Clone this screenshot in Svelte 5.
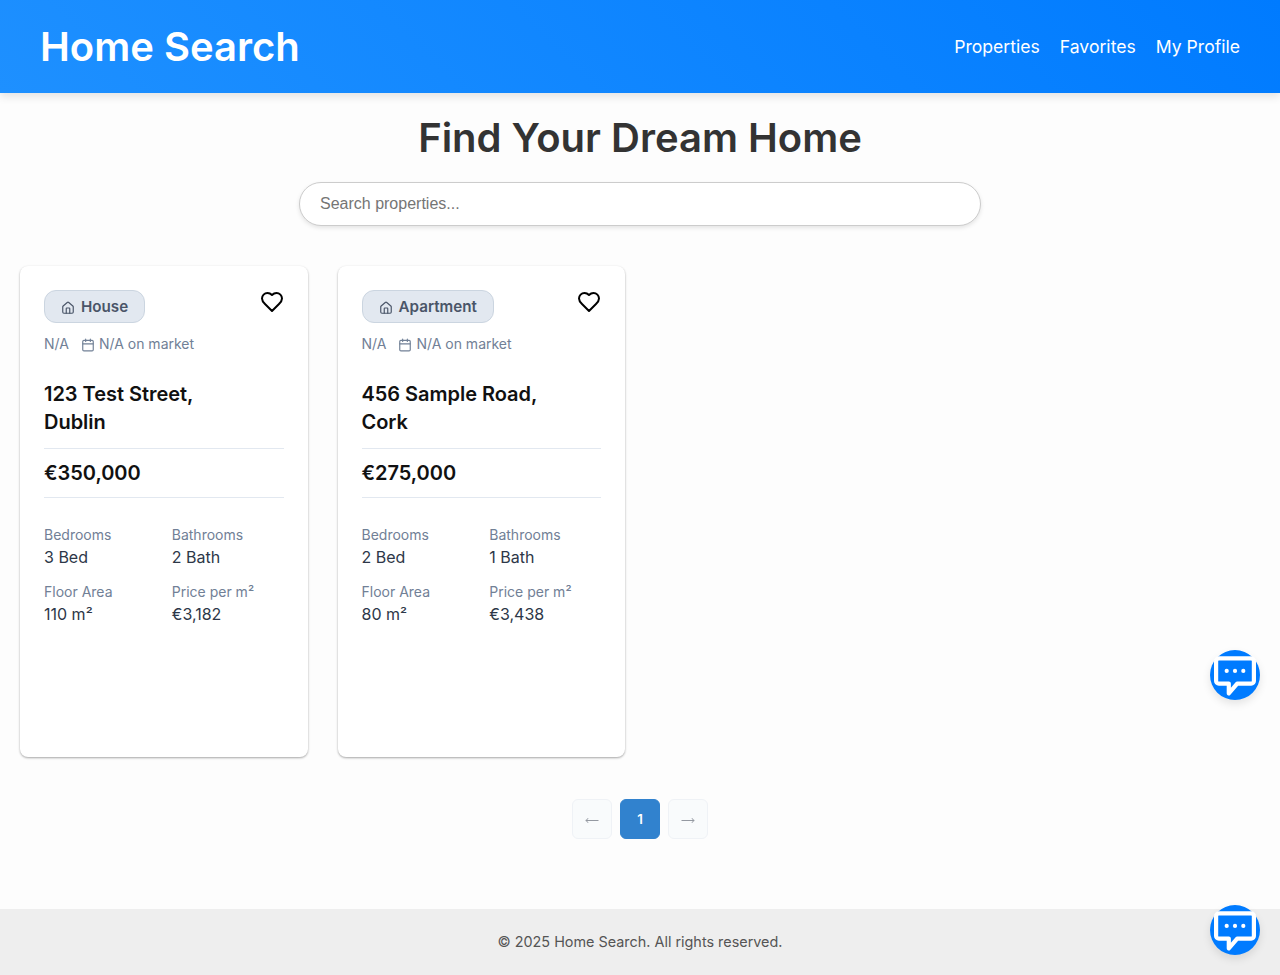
<script>
  const links = ['Properties', 'Favorites', 'My Profile'];
  const properties = [
    { type: 'House', address: '123 Test Street, Dublin', price: '€350,000', facts: [['Bedrooms', '3 Bed'], ['Bathrooms', '2 Bath'], ['Floor Area', '110 m²'], ['Price per m²', '€3,182']] },
    { type: 'Apartment', address: '456 Sample Road, Cork', price: '€275,000', facts: [['Bedrooms', '2 Bed'], ['Bathrooms', '1 Bath'], ['Floor Area', '80 m²'], ['Price per m²', '€3,438']] }
  ];
</script>

{#snippet chat(place)}
  <button class="chat {place}" aria-label="Chat">
    <svg width="50" height="50" viewBox="0 0 50 50" fill="none" stroke="#fff" stroke-width="4.2" stroke-linejoin="round">
      <path d="M8.8 8.4H41.2A2.7 2.7 0 0 1 43.9 11.1V30.9A2.7 2.7 0 0 1 41.2 33.6H27.2L18.8 43.3V33.6H8.8A2.7 2.7 0 0 1 6.1 30.9V11.1A2.7 2.7 0 0 1 8.8 8.4Z" />
      <g fill="#fff" stroke="none"><circle cx="16.7" cy="20.9" r="2.1" /><circle cx="25" cy="20.9" r="2.1" /><circle cx="33.3" cy="20.9" r="2.1" /></g>
    </svg>
  </button>
{/snippet}

<div class="page">
  <header>
    <h1>Home Search</h1>
    <nav>
      {#each links as link}<a href="#top">{link}</a>{/each}
    </nav>
  </header>

  <main>
    <h2>Find Your Dream Home</h2>
    <input class="search" type="text" placeholder="Search properties..." />

    <div class="grid">
      {#each properties as p}
        <article>
          <div class="top">
            <span class="badge">
              <svg width="14" height="14" viewBox="0 0 24 24" fill="none" stroke="currentColor" stroke-width="2" stroke-linecap="round" stroke-linejoin="round"><path d="M15 21v-8a1 1 0 0 0-1-1h-4a1 1 0 0 0-1 1v8" /><path d="M3 10a2 2 0 0 1 .709-1.528l7-5.999a2 2 0 0 1 2.582 0l7 5.999A2 2 0 0 1 21 10v9a2 2 0 0 1-2 2H5a2 2 0 0 1-2-2z" /></svg>
              {p.type}
            </span>
            <button class="heart" aria-label="Save">
              <svg width="24" height="24" viewBox="0 0 24 24" fill="none" stroke="#000" stroke-width="2" stroke-linecap="round" stroke-linejoin="round"><path d="M19 14c1.49-1.46 3-3.21 3-5.5A5.5 5.5 0 0 0 16.5 3c-1.76 0-3 .5-4.5 2-1.5-1.5-2.74-2-4.5-2A5.5 5.5 0 0 0 2 8.5c0 2.3 1.5 4.05 3 5.5l7 7Z" /></svg>
            </button>
          </div>
          <div class="meta">
            <span>N/A</span>
            <span class="market">
              <svg width="14" height="14" viewBox="0 0 24 24" fill="none" stroke="currentColor" stroke-width="2" stroke-linecap="round" stroke-linejoin="round"><path d="M8 2v4M16 2v4M3 10h18" /><rect x="3" y="4" width="18" height="18" rx="2" /></svg>
              N/A on market
            </span>
          </div>
          <h3>{p.address}</h3>
          <div class="price">{p.price}</div>
          <dl>
            {#each p.facts as [label, value]}
              <div><dt>{label}</dt><dd>{value}</dd></div>
            {/each}
          </dl>
        </article>
      {/each}
    </div>

    <div class="pages">
      <button class="arrow" disabled aria-label="Previous">
        <svg width="14" height="7" viewBox="0 0 14 7" fill="none" stroke="currentColor"><path d="M0.8 3.5H13.5M3 1.2Q2.4 2.9 0.8 3.5Q2.4 4.1 3 5.8" /></svg>
      </button>
      <button class="current">1</button>
      <button class="arrow" disabled aria-label="Next">
        <svg width="14" height="7" viewBox="0 0 14 7" fill="none" stroke="currentColor"><path d="M0.5 3.5H13.2M11 1.2Q11.6 2.9 13.2 3.5Q11.6 4.1 11 5.8" /></svg>
      </button>
    </div>
  </main>

  <footer>© 2025 Home Search. All rights reserved.</footer>
</div>
{@render chat('upper')}
{@render chat('lower')}

<style>
  :global(body) { background: #fdfdfd; }
  * { box-sizing: border-box; }
  .page { display: flex; flex-direction: column; height: 975px; font-family: Inter, sans-serif; color: #333; }
  button { font-family: inherit; padding: 0; }
  h1, h2, h3, dl, dd { margin: 0; }
  header { display: flex; align-items: center; justify-content: space-between; height: 93px; padding: 0 40px; background: linear-gradient(45deg, #1e90ff, #007bff); box-shadow: 0 4px 8px rgba(0, 0, 0, 0.1); color: #fff; }
  h1 { font-size: 40px; font-weight: 600; line-height: 53px; }
  nav { display: flex; gap: 20px; }
  nav a { color: #fff; text-decoration: none; font-size: 17.6px; line-height: 23px; }
  main { flex: 1; padding: 20px; display: flex; flex-direction: column; }
  h2 { text-align: center; font-size: 40px; font-weight: 600; line-height: 49px; }
  .search { align-self: center; width: 682px; height: 44px; margin-top: 20px; padding: 0 20px; border: 1px solid #ccc; border-radius: 25px; background: #fff; box-shadow: 0 2px 4px rgba(0, 0, 0, 0.1); font: 16px "Liberation Sans", sans-serif; }
  .search::placeholder { color: #757575; }
  .grid { display: grid; grid-template-columns: repeat(4, 1fr); gap: 30px; margin-top: 40px; }
  article { height: 491px; padding: 24px; border-radius: 8px; background: #fff; box-shadow: 0 1px 3px rgba(0, 0, 0, 0.12), 0 1px 2px rgba(0, 0, 0, 0.24); }
  .top { display: flex; justify-content: space-between; align-items: flex-start; height: 33px; }
  .badge { display: flex; align-items: center; gap: 6px; height: 33px; padding: 0 16px; border: 1px solid #cbd5e0; border-radius: 12px; background: #e2e8f0; color: #4a5568; font-size: 15.2px; font-weight: 600; }
  .badge svg { margin-top: 2px; }
  .heart { display: flex; border: 0; background: none; }
  .meta { display: flex; gap: 12px; margin-top: 11px; color: #718096; font-size: 14px; line-height: 20px; }
  .market { display: flex; align-items: center; gap: 4px; }
  .market svg { margin-top: 2px; }
  h3 { width: 192px; margin-top: 26px; color: #111; font-size: 20px; font-weight: 600; line-height: 28px; letter-spacing: -0.03px; }
  .price { height: 50px; margin-top: 12px; border-top: 1px solid #e2e8f0; border-bottom: 1px solid #e2e8f0; color: #111; font-size: 20px; font-weight: 600; line-height: 48px; letter-spacing: -0.03px; }
  dl { display: grid; grid-template-columns: 1fr 1fr; gap: 12px 16px; margin-top: 26px; }
  dt { color: #718096; font-size: 14px; line-height: 22px; }
  dd { color: #2d3748; font-size: 16px; line-height: 23px; }
  .pages { display: flex; justify-content: center; gap: 8px; margin-top: 42px; }
  .pages button { display: flex; align-items: center; justify-content: center; width: 40px; height: 40px; border: 1px solid #e2e8f0; border-radius: 6px; background: #f7fafc; color: #2d3748; font-size: 13.33px; font-weight: 600; }
  .pages button.arrow { padding-top: 3px; opacity: 0.5; }
  .pages button.current { border-color: #3182ce; background: #3182ce; color: #fff; }
  footer { height: 66px; background: #eee; color: #555; text-align: center; font-size: 14.4px; line-height: 66px; }
  .chat { position: fixed; right: 20px; width: 50px; height: 50px; border: 0; border-radius: 50%; background: #007bff; box-shadow: 0 4px 8px rgba(0, 0, 0, 0.1); }
  .chat svg { display: block; }
  .upper { top: 650px; }
  .lower { top: 905px; }
</style>
